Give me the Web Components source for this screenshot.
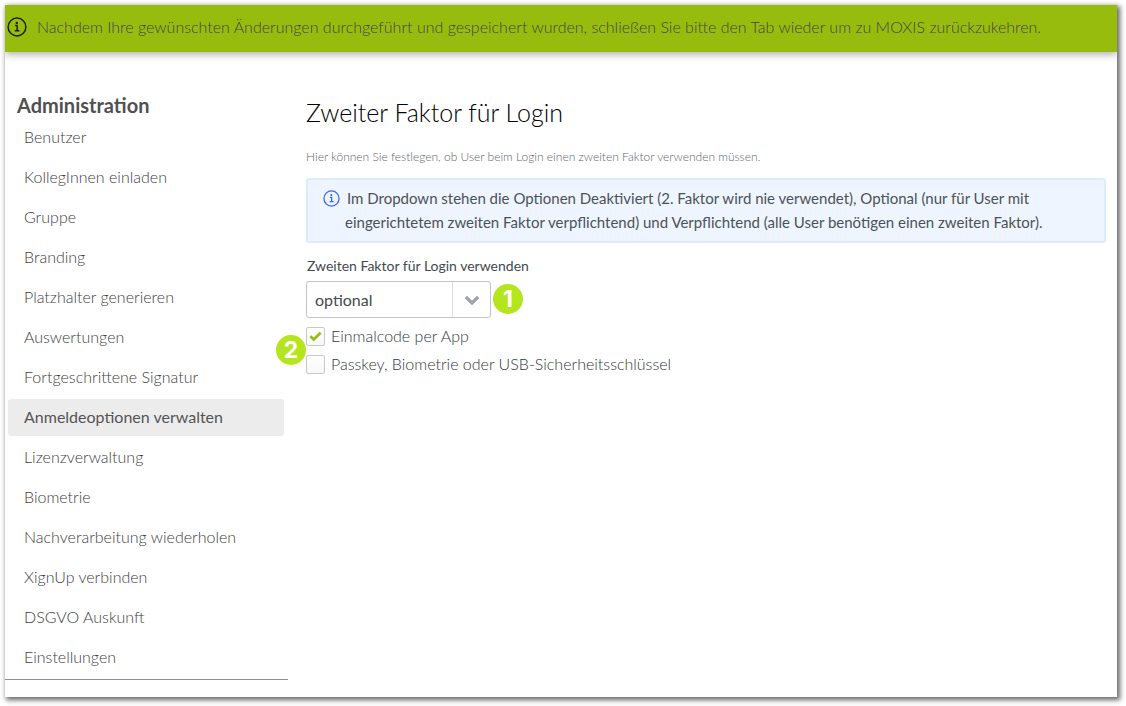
<!DOCTYPE html>
<html lang="de">
<head>
<meta charset="utf-8">
<meta name="viewport" content="width=device-width, initial-scale=1">
<title>Administration</title>
<style>
  html { height: 100%; }
  body {
    margin: 0; min-height: 100%; box-sizing: border-box; padding: 5px 9px 9px 5px;
    display: flex; background: #fff; color: #404040;
    font-family: Lato, "Liberation Sans", sans-serif; font-size: 16px; font-weight: 300;
  }
</style>
</head>
<body>
<admin-page>
  <notice-bar slot="notice">Nachdem Ihre gewünschten Änderungen durchgeführt und gespeichert wurden, schließen Sie bitte den Tab wieder um zu MOXIS zurückzukehren.</notice-bar>
  <side-nav slot="nav" heading="Administration">
    <nav-item>Benutzer</nav-item>
    <nav-item>KollegInnen einladen</nav-item>
    <nav-item>Gruppe</nav-item>
    <nav-item>Branding</nav-item>
    <nav-item>Platzhalter generieren</nav-item>
    <nav-item>Auswertungen</nav-item>
    <nav-item>Fortgeschrittene Signatur</nav-item>
    <nav-item current>Anmeldeoptionen verwalten</nav-item>
    <nav-item>Lizenzverwaltung</nav-item>
    <nav-item>Biometrie</nav-item>
    <nav-item>Nachverarbeitung wiederholen</nav-item>
    <nav-item>XignUp verbinden</nav-item>
    <nav-item>DSGVO Auskunft</nav-item>
    <nav-item>Einstellungen</nav-item>
  </side-nav>
  <second-factor></second-factor>
</admin-page>

<script>
const define = (name, html, setup) => {
  const template = document.createElement('template');
  template.innerHTML = html;
  customElements.define(name, class extends HTMLElement {
    constructor() {
      super();
      this.attachShadow({ mode: 'open' }).append(template.content.cloneNode(true));
    }
    connectedCallback() { if (setup) setup(this, this.shadowRoot); }
  });
};

define('info-icon', `
  <style>
    :host { display: block; width: 20px; height: 20px; flex: none; }
    svg { display: block; width: 100%; height: 100%; }
  </style>
  <svg viewBox="0 0 20 20" fill="none" stroke="currentColor" aria-hidden="true">
    <circle cx="10" cy="10" r="8.9" stroke-width="1.5"/>
    <path d="M8.1 8.6h2.1v5M7.8 13.8h4.6" stroke-width="1.5"/>
    <circle cx="9.8" cy="5.9" r="1.2" fill="currentColor" stroke="none"/>
  </svg>`);

define('step-badge', `
  <style>
    :host {
      display: flex; align-items: center; justify-content: center; flex: none;
      width: 30px; height: 30px; border-radius: 50%; background: #b5e61d; color: #fff;
      font: 700 23px/30px Inter, "Liberation Sans", sans-serif;
    }
  </style><slot></slot>`);

define('notice-bar', `
  <style>
    :host {
      display: flex; align-items: center; gap: 10px; min-height: 47px; padding: 0 2px;
      box-sizing: border-box; background: #98bc0e; color: #444;
      box-shadow: 0 2px 8px rgba(0,0,0,.35); clip-path: inset(0 0 -16px 0);
    }
    info-icon { color: #1c2200; margin-bottom: 3px; }
    p { margin: 0 0 4px; line-height: 20px; }
  </style>
  <info-icon></info-icon><p><slot></slot></p>`);

define('nav-item', `
  <style>
    :host { display: block; }
    a {
      display: block; padding: 0 16px 2px; border-radius: 3px; line-height: 35px;
      color: inherit; text-decoration: none;
    }
    :host([current]) a { background: #ececec; font-weight: 400; color: #555; }
  </style>
  <a href="#"><slot></slot></a>`, (host, root) => {
    if (host.hasAttribute('current')) root.querySelector('a').setAttribute('aria-current', 'page');
  });

define('side-nav', `
  <style>
    :host { display: block; border-bottom: 1px solid #909090; padding: 0 4px 3px 3px; }
    h2 { margin: 0 0 2px; padding-left: 9px; font-size: 20px; line-height: 24px; font-weight: 700; color: #505050; }
    nav { display: flex; flex-direction: column; gap: 3px; }
  </style>
  <h2></h2><nav><slot></slot></nav>`, (host, root) => {
    root.querySelector('h2').textContent = host.getAttribute('heading');
  });

define('info-box', `
  <style>
    :host {
      display: block; border: 2px solid #dcecfd; border-radius: 3px; background: #eff5ff;
      padding: 6px 48px 7px 37px; font-weight: 400; font-size: 15px; line-height: 24px; color: #4c5258;
    }
    p { margin: 0; text-indent: -22px; }
    info-icon { display: inline-block; width: 17px; height: 17px; margin-right: 7px; vertical-align: -3px; color: #3465f5; text-indent: 0; }
  </style>
  <p><info-icon></info-icon><slot></slot></p>`);

define('factor-select', `
  <style>
    :host { display: block; font-weight: 400; color: #44494f; }
    label { display: block; padding-left: 1px; font-size: 14px; line-height: 20px; margin-bottom: 5px; }
    .row { display: flex; align-items: center; gap: 2px; }
    .box {
      display: grid; grid-template-columns: 1fr 38px; width: 185px; height: 37px;
      box-sizing: border-box; border: 1px solid #c4c4c4; border-radius: 3px;
    }
    select {
      grid-area: 1 / 1 / 2 / 3; appearance: none; border: 0; margin: 0; padding: 0 46px 0 8px;
      background: transparent; font: inherit; font-size: 16px; color: inherit; outline: 0;
    }
    .arrow {
      grid-area: 1 / 2; display: flex; align-items: center; justify-content: center;
      border-left: 1px solid #dedede; pointer-events: none;
    }
    svg { width: 16px; height: 12px; }
    step-badge { margin-bottom: 2px; }
  </style>
  <label for="factor">Zweiten Faktor für Login verwenden</label>
  <div class="row">
    <div class="box">
      <select id="factor"><option>deaktiviert</option><option selected>optional</option><option>verpflichtend</option></select>
      <span class="arrow"><svg viewBox="0 0 16 12" fill="none" stroke="#a0a4a8" stroke-width="3.4" aria-hidden="true"><path d="M1.8 3 8 9l6.2-6"/></svg></span>
    </div>
    <step-badge>1</step-badge>
  </div>`);

define('check-option', `
  <style>
    :host { display: block; }
    label { display: flex; align-items: center; gap: 6px; line-height: 20px; color: #34383c; }
    .tick { display: grid; flex: none; width: 19px; height: 19px; }
    input {
      grid-area: 1 / 1; appearance: none; margin: 0; box-sizing: border-box; width: 19px; height: 19px;
      border: 1px solid #c8c8c8; border-radius: 2px; background: linear-gradient(#fff, #f7f7f7);
    }
    svg { grid-area: 1 / 1; place-self: center; width: 13px; height: 11px; z-index: 1; visibility: hidden; pointer-events: none; }
    input:checked + svg { visibility: visible; }
  </style>
  <label><span class="tick"><input type="checkbox"><svg viewBox="0 0 13 11" fill="none" stroke="#98bc0e" stroke-width="2.8" aria-hidden="true"><path d="M1.4 5.2 4.8 8.4 11.6 1.8"/></svg></span><slot></slot></label>`,
  (host, root) => { root.querySelector('input').checked = host.hasAttribute('checked'); });

define('second-factor', `
  <style>
    :host { display: block; }
    h1 { margin: 0; font-size: 25px; line-height: 35px; font-weight: 300; color: #000; }
    .lead { margin: 17px 0 11px; font-size: 12px; line-height: 20px; color: #5c656d; }
    factor-select { margin-top: 13px; }
    .options { position: relative; display: flex; flex-direction: column; gap: 8px; margin-top: 8px; }
    .options step-badge { position: absolute; left: -30px; top: 9px; }
  </style>
  <h1>Zweiter Faktor für Login</h1>
  <p class="lead">Hier können Sie festlegen, ob User beim Login einen zweiten Faktor verwenden müssen.</p>
  <info-box>Im Dropdown stehen die Optionen Deaktiviert (2. Faktor wird nie verwendet), Optional (nur für User mit eingerichtetem zweiten Faktor verpflichtend) und Verpflichtend (alle User benötigen einen zweiten Faktor).</info-box>
  <factor-select></factor-select>
  <div class="options">
    <check-option checked>Einmalcode per App</check-option>
    <check-option>Passkey, Biometrie oder USB-Sicherheitsschlüssel</check-option>
    <step-badge>2</step-badge>
  </div>`);

define('admin-page', `
  <style>
    :host {
      flex: 1; min-width: 0; display: flex; flex-direction: column; background: #fff;
      box-shadow: 2px 2px 5px 1px rgba(0,0,0,.6);
    }
    .columns { display: grid; grid-template-columns: 283px minmax(0, 1fr); gap: 18px; align-items: start; padding: 41px 11px 17px 0; }
    main { padding-top: 2px; }
  </style>
  <slot name="notice"></slot>
  <div class="columns"><slot name="nav"></slot><main><slot></slot></main></div>`);
</script>
</body>
</html>
